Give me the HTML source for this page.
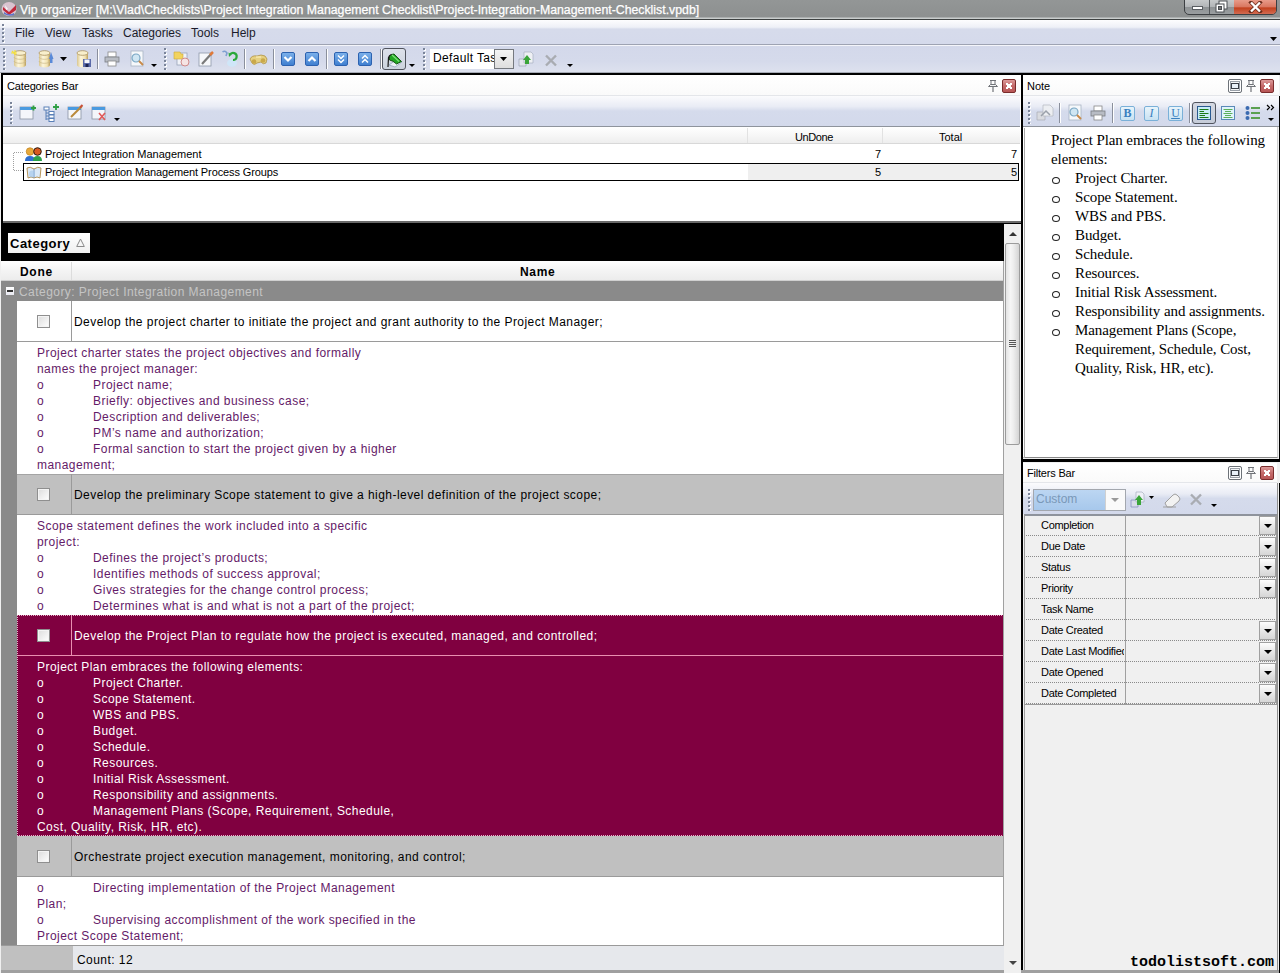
<!DOCTYPE html>
<html><head><meta charset="utf-8">
<style>
*{margin:0;padding:0;box-sizing:border-box}
html,body{width:1280px;height:973px;overflow:hidden;background:#f0f0f0;font-family:"Liberation Sans",sans-serif;font-size:11px;color:#000}
.a{position:absolute;white-space:nowrap}
#title{left:0;top:0;width:1280px;height:20px;background:linear-gradient(#939696 0,#8d9090 17px,#c9cdcd 18px);border-bottom:1px solid #3e4242}
#title .t{left:20px;top:3px;color:#fff;font-size:12.3px;white-space:nowrap;-webkit-text-stroke:0.25px #fff}
#menu{left:0;top:20px;width:1280px;height:25px;background:linear-gradient(#fdfdfe,#eef0f7 30%,#d6dbeb 38%,#d5daeb);border-bottom:1px solid #9ea3b2}
#menu span{position:absolute;top:6px;font-size:12px;color:#1b1b2a}
#tb{left:0;top:45px;width:1280px;height:28px;background:linear-gradient(#d3d8ea,#d5daeb 60%,#dde1ee);box-shadow:inset 0 1px 0 #f4f5fa;border-bottom:1px solid #a5aab5}
.grip{position:absolute;width:3px;background-image:linear-gradient(#7a8499 50%,transparent 50%),linear-gradient(#fff 50%,transparent 50%);background-size:2px 4px,2px 4px;background-position:0 0,1px 1px;background-repeat:repeat-y}
#cat{left:0;top:0;width:0;height:0}
#catbg{left:1px;top:73px;width:1022px;height:151px;background:#fff;border:2px solid #000;border-bottom:none}
#grid{left:2px;top:224px;width:1019px;height:749px;background:#fff}
.pl{font-size:12px;letter-spacing:0.45px;line-height:16px;white-space:nowrap}
.tl{font-size:12px;letter-spacing:0.45px;line-height:16px;white-space:nowrap}
.cb{width:13px;height:13px;border:1px solid #8f8f8f;background:linear-gradient(135deg,#dcdcdc,#fff);box-shadow:inset 0 0 0 1px #f4f4f4}
.sep{position:absolute;top:4px;width:1px;height:20px;background:#8a8f9c;box-shadow:1px 0 0 #fff}
.bb{width:14px;height:14px;border-radius:2px;background:linear-gradient(#7bb0ea,#3f7fd0);border:1px solid #2c62b0}
.bb svg{position:absolute;left:-1px;top:-1px}
.xbtn{width:14px;height:14px;border:1px solid #7a2c2c;border-radius:2px;background:linear-gradient(#dc9a9a,#c46a6a 50%,#b85656)}
.xbtn:after{content:"";position:absolute;left:3px;top:3px;width:6px;height:6px;background:linear-gradient(45deg,transparent 38%,#fff 38%,#fff 62%,transparent 62%),linear-gradient(-45deg,transparent 38%,#fff 38%,#fff 62%,transparent 62%)}
.nt{font-family:"Liberation Serif",serif;font-size:15px;line-height:19px;letter-spacing:-0.1px}
.flt{width:14px;height:14px;border:1px solid #6d7278;border-radius:2px;background:#f2f4f6;box-shadow:inset 0 0 0 1px #fff,inset 0 0 0 2px #9aa0a8}
.flt:after{content:"";position:absolute;left:2px;top:3px;width:8px;height:6px;border:1px solid #3a4048;background:#e8f0f8;box-sizing:border-box}
.fb{width:15px;height:15px;border:1px solid #7ab0d8;border-radius:2px;background:linear-gradient(#e8f4fb,#c8e2f2);color:#3a80c0;font-family:"Liberation Serif",serif;font-size:12px;line-height:13px;text-align:center}
.ddb{width:17px;height:19px;border:1px solid #a0a0a0;background:linear-gradient(#fdfdfd,#e8e8e8 50%,#d6d6d6)}
.ddb:after{content:"";position:absolute;left:4px;top:7px;border-left:4px solid transparent;border-right:4px solid transparent;border-top:4px solid #000}
.nb{width:8px;height:7px;border:1.2px solid #222;border-radius:50%}
</style></head><body>
<div id="title" class="a">
<svg class="a" style="left:1px;top:1px" width="16" height="16" viewBox="0 0 16 16"><ellipse cx="8" cy="8" rx="7.5" ry="7" fill="#d9c3cf"/><path d="M2 6 L8 11 L15 4 L15 9 L8 14 L2 9Z" fill="#c0283a"/><path d="M3 11 Q8 15 13 12 L13 14 Q8 16 3 13Z" fill="#5f73c9"/><path d="M4 4 L7 8 L5 9Z" fill="#fff" opacity=".8"/></svg>
<div class="t a">Vip organizer [M:\Vlad\Checklists\Project Integration Management Checklist\Project-Integration-Management-Checklist.vpdb]</div>
<div class="a" style="left:1184px;top:-2px;width:93px;height:17px;border:1px solid #3c3f42;border-radius:0 0 5px 5px;overflow:hidden;background:linear-gradient(#c9cccd,#b3b6b8 50%,#8e9294 55%,#9a9ea0)">
<div class="a" style="left:24px;top:0;width:1px;height:16px;background:#55595c"></div>
<div class="a" style="left:49px;top:0;width:43px;height:16px;background:linear-gradient(#eaa08f,#d9765f 50%,#c2401d 55%,#d5725a)"></div>
<div class="a" style="left:7px;top:7px;width:11px;height:4px;background:#fff;border:1px solid #5a5e62"></div>
<svg class="a" style="left:30px;top:1px" width="13" height="13" viewBox="0 0 13 13"><rect x="4" y="1" width="8" height="8" fill="#fff" stroke="#4a4e52"/><rect x="1" y="4" width="8" height="8" fill="#fff" stroke="#4a4e52"/><rect x="3.5" y="6.5" width="3" height="3" fill="#777" stroke="#4a4e52"/></svg>
<svg class="a" style="left:63px;top:2px" width="15" height="12" viewBox="0 0 15 12"><path d="M3 1.5 L12 10.5 M12 1.5 L3 10.5" stroke="#6a2a1a" stroke-width="3.8" stroke-linecap="square"/><path d="M3 1.5 L12 10.5 M12 1.5 L3 10.5" stroke="#fff" stroke-width="2.4"/></svg>
</div>
</div>
<div id="menu" class="a">
<div class="grip" style="left:2px;top:4px;height:20px"></div>
<span style="left:15px">File</span><span style="left:45px">View</span><span style="left:82px">Tasks</span><span style="left:123px">Categories</span><span style="left:191px">Tools</span><span style="left:231px">Help</span>
<svg class="a" style="left:1270px;top:17px" width="7" height="4"><path d="M0 0H7L3.5 4Z" fill="#000"/></svg>
</div>
<div id="tb" class="a">
<div class="grip" style="left:3px;top:3px;height:22px"></div>
<div class="grip" style="left:164px;top:3px;height:22px"></div>
<div class="grip" style="left:423px;top:3px;height:22px"></div>
<div class="sep" style="left:97px"></div><div class="sep" style="left:244px"></div><div class="sep" style="left:273px"></div><div class="sep" style="left:326px"></div><div class="sep" style="left:380px"></div>
<svg class="a" style="left:11px;top:5px" width="17" height="18" viewBox="0 0 17 18"><defs><linearGradient id="cy" x1="0" x2="1"><stop offset="0" stop-color="#d9c68e"/><stop offset=".35" stop-color="#fdf6dc"/><stop offset=".75" stop-color="#f2e2b0"/><stop offset="1" stop-color="#b89c5a"/></linearGradient></defs><path d="M3 3 V15 A6 2.5 0 0 0 15 15 V3Z" fill="url(#cy)"/><ellipse cx="9" cy="3" rx="6" ry="2.3" fill="#f8efcc" stroke="#a89060" stroke-width=".8"/><path d="M3 7 A6 2.3 0 0 0 15 7 M3 11 A6 2.3 0 0 0 15 11" fill="none" stroke="#c9b888" stroke-width=".7"/><path d="M1 1 L4 4 M4 0 V5 M0 3 H6" stroke="#f6e23b" stroke-width="1.2"/></svg>
<svg class="a" style="left:37px;top:5px" width="17" height="18" viewBox="0 0 17 18"><path d="M2 3 V15 A5.5 2.5 0 0 0 13 15 V3Z" fill="url(#cy)"/><ellipse cx="7.5" cy="3" rx="5.5" ry="2.3" fill="#f8efcc" stroke="#a89060" stroke-width=".8"/><path d="M2 7 A5.5 2.3 0 0 0 13 7 M2 11 A5.5 2.3 0 0 0 13 11" fill="none" stroke="#c9b888" stroke-width=".7"/><path d="M12 9 L14 2 L16.5 9Z" fill="#5a8ad8"/><rect x="13" y="8" width="2.5" height="5" fill="#5a8ad8"/></svg>
<svg class="a" style="left:60px;top:12px" width="7" height="4"><path d="M0 0H7L3.5 4Z" fill="#000"/></svg>
<svg class="a" style="left:75px;top:5px" width="17" height="18" viewBox="0 0 17 18"><path d="M2 3 V15 A5.5 2.5 0 0 0 13 15 V3Z" fill="url(#cy)"/><ellipse cx="7.5" cy="3" rx="5.5" ry="2.3" fill="#f8efcc" stroke="#a89060" stroke-width=".8"/><rect x="8" y="9" width="8" height="8" fill="#5a6aa8"/><rect x="9.5" y="9.5" width="5" height="3.5" fill="#f4f6fb"/><rect x="10.5" y="14" width="3" height="3" fill="#1c2450"/></svg>
<svg class="a" style="left:104px;top:6px" width="16" height="16" viewBox="0 0 16 16"><rect x="4" y="1" width="8" height="5" fill="#fff" stroke="#888" stroke-width=".8"/><rect x="1" y="6" width="14" height="5" fill="#b8bcc4" stroke="#7a7e86" stroke-width=".8"/><rect x="4" y="10" width="8" height="5" fill="#fff" stroke="#888" stroke-width=".8"/></svg>
<svg class="a" style="left:129px;top:5px" width="16" height="17" viewBox="0 0 16 17"><rect x="2" y="1" width="12" height="15" fill="#f6f8fb" stroke="#a9b3c3" stroke-width=".8"/><circle cx="7" cy="8" r="4" fill="#cfe6f3" stroke="#7aa7c4" stroke-width="1.2"/><path d="M10 11 L14 15" stroke="#c88a4a" stroke-width="2"/></svg>
<svg class="a" style="left:151px;top:19px" width="6" height="3"><path d="M0 0H6L3 3Z" fill="#000"/></svg>
<svg class="a" style="left:173px;top:5px" width="18" height="17" viewBox="0 0 18 17"><rect x="4" y="3" width="10" height="12" fill="#f1f3f8" stroke="#9aa4b8" stroke-width=".8"/><path d="M1 2 H7 L8 4 H10 V9 H1Z" fill="#f2d35e" stroke="#c9a93a" stroke-width=".6"/><circle cx="12" cy="12" r="4" fill="#f5e4e4" stroke="#d08a8a" stroke-width="1"/></svg>
<svg class="a" style="left:197px;top:5px" width="18" height="17" viewBox="0 0 18 17"><rect x="2" y="3" width="12" height="13" fill="#f6f7fa" stroke="#8f99ab" stroke-width=".8"/><path d="M5 14 L15 3" stroke="#7a7a7a" stroke-width="2.2"/><path d="M13 5 L16 2" stroke="#e07a3a" stroke-width="2.5"/></svg>
<svg class="a" style="left:221px;top:4px" width="18" height="18" viewBox="0 0 18 18"><ellipse cx="11" cy="14" rx="5" ry="3.8" fill="#cfe6f8"/><path d="M1.5 3 Q4 1 6 4 L5 7" stroke="#7f9fd0" stroke-width="1.6" fill="none"/><path d="M9 6 A3.5 3.5 0 1 1 12 11" stroke="#2aa83a" stroke-width="2.2" fill="none"/><path d="M7.5 3.5 L10.5 5.5 L8 8Z" fill="#2aa83a"/></svg>
<svg class="a" style="left:249px;top:8px" width="19" height="13" viewBox="0 0 19 13"><path d="M1 6 Q3 2 8 3 L12 2 Q17 2 18 6 L17 10 Q14 12 12 9 L8 10 Q5 13 3 10Z" fill="#e6d082" stroke="#a88a3a" stroke-width=".7"/><circle cx="5" cy="8.5" r="2.3" fill="#c9a84a"/><circle cx="14" cy="7.5" r="2.3" fill="#c9a84a"/><path d="M7 4 H12" stroke="#fff3c0" stroke-width="1"/></svg>
<div class="a bb" style="left:281px;top:7px"><svg width="14" height="14" viewBox="0 0 14 14"><path d="M3.5 5 L7 8.5 L10.5 5" stroke="#fff" stroke-width="2.2" fill="none"/></svg></div>
<div class="a bb" style="left:305px;top:7px"><svg width="14" height="14" viewBox="0 0 14 14"><path d="M3.5 9 L7 5.5 L10.5 9" stroke="#fff" stroke-width="2.2" fill="none"/></svg></div>
<div class="a bb" style="left:334px;top:7px"><svg width="14" height="14" viewBox="0 0 14 14"><path d="M4 3.5 L7 6.5 L10 3.5 M4 7.5 L7 10.5 L10 7.5" stroke="#fff" stroke-width="1.5" fill="none"/></svg></div>
<div class="a bb" style="left:358px;top:7px"><svg width="14" height="14" viewBox="0 0 14 14"><path d="M4 6.5 L7 3.5 L10 6.5 M4 10.5 L7 7.5 L10 10.5" stroke="#fff" stroke-width="1.5" fill="none"/></svg></div>
<div class="a" style="left:382px;top:3px;width:24px;height:22px;border:1px solid #50545e;border-radius:3px;background:linear-gradient(#dde1ea,#ccd3de)"></div>
<svg class="a" style="left:385px;top:6px" width="18" height="17" viewBox="0 0 18 17"><path d="M4 14 L10 16 L17 11 L11 9Z" fill="#eef2f6" stroke="#8aa0b8" stroke-width=".7"/><path d="M4.5 5 Q6 3 9 3 L16.5 10.5 L11.5 13 Q8 9.5 4.5 9Z" fill="#22a622" stroke="#0c4a0c" stroke-width=".9"/><path d="M7 4 L14 10.5" stroke="#7ee07a" stroke-width="1.2"/><path d="M3 16 L3.5 6.5 Q4 4 6.5 3.5" stroke="#1a1a1a" stroke-width="1.2" fill="none"/></svg>
<svg class="a" style="left:409px;top:19px" width="6" height="3"><path d="M0 0H6L3 3Z" fill="#000"/></svg>
<div class="a" style="left:430px;top:4px;width:84px;height:20px;background:#fff"></div>
<div class="a" style="left:433px;top:6px;font-size:12px;letter-spacing:0.35px;width:61px;overflow:hidden;white-space:nowrap">Default Task</div>
<div class="a" style="left:494px;top:4px;width:20px;height:20px;border:1px solid #75797f;background:linear-gradient(#f4f4f4,#dedede)"></div>
<svg class="a" style="left:500px;top:12px" width="7" height="4"><path d="M0 0H7L3.5 4Z" fill="#000"/></svg>
<svg class="a" style="left:517px;top:6px" width="18" height="17" viewBox="0 0 18 17"><path d="M2 8 H9 V15 H2Z" fill="#e3e6ec" stroke="#9aa2b4" stroke-width=".7"/><path d="M7 1 H14 L16 3 V12 H7Z" fill="#eef0f4" stroke="#a8b0c0" stroke-width=".7"/><path d="M8 13 L8 9 L6 9 L10 4 L14 9 L12 9 L12 13Z" fill="#3aa53a"/></svg>
<svg class="a" style="left:544px;top:9px" width="14" height="13" viewBox="0 0 14 13"><path d="M2 1.5 L12 11.5 M12 1.5 L2 11.5" stroke="#a9acb2" stroke-width="2.4"/></svg>
<svg class="a" style="left:567px;top:19px" width="6" height="3"><path d="M0 0H6L3 3Z" fill="#000"/></svg>
</div>
<div id="catbg" class="a"></div>
<div id="cat" class="a">
<div class="a" style="left:3px;top:75px;width:1017px;height:21px;background:linear-gradient(#fff,#fafafa);border-bottom:1px solid #e4e6ea;border-radius:3px 3px 0 0"></div>
<div class="a" style="left:7px;top:80px;font-size:11px;letter-spacing:-0.15px">Categories Bar</div>
<svg class="a" style="left:987px;top:79px" width="12" height="14" viewBox="0 0 12 14"><path d="M3 1.5 H9 M4 1.5 V5.5 M8 1.5 V5.5 M1.5 7.5 H10.5 L8.5 5.5 H3.5Z" stroke="#707378" stroke-width="1" fill="#f4f4f4"/><path d="M6 8 V13" stroke="#707378" stroke-width="1.2"/></svg>
<div class="a xbtn" style="left:1002px;top:79px"></div>
<div class="a" style="left:3px;top:96px;width:1017px;height:31px;background:linear-gradient(#fbfbfd,#e9ecf5 35%,#d5dbec 50%,#d3d9eb);border-bottom:1px solid #8e939c"></div>
<div class="grip" style="left:10px;top:102px;height:22px"></div>
<svg class="a" style="left:19px;top:104px" width="17" height="17" viewBox="0 0 17 17"><rect x="1" y="3" width="13" height="12" fill="#f4f6fa" stroke="#8a93a4" stroke-width=".8"/><rect x="1" y="3" width="13" height="3" fill="#4a9ae0"/><path d="M12 4 H17 M14.5 1.5 V6.5" stroke="#2f9f45" stroke-width="1.8"/></svg>
<svg class="a" style="left:43px;top:104px" width="17" height="18" viewBox="0 0 17 18"><path d="M3 5 V16 M3 9 H6 M3 12 H6 M3 15 H6" stroke="#5a80b8" stroke-width="1"/><rect x="1" y="3" width="5" height="3" fill="#fff" stroke="#5a80b8"/><rect x="6" y="7.5" width="5" height="3" fill="#fff" stroke="#5a80b8"/><rect x="6" y="11" width="5" height="3" fill="#fff" stroke="#5a80b8"/><rect x="6" y="14.5" width="5" height="3" fill="#fff" stroke="#5a80b8"/><path d="M10 3 H16 M13 0 V6" stroke="#2f9f45" stroke-width="1.8"/></svg>
<svg class="a" style="left:67px;top:104px" width="17" height="17" viewBox="0 0 17 17"><rect x="1" y="3" width="13" height="12" fill="#f4f6fa" stroke="#8a93a4" stroke-width=".8"/><rect x="1" y="3" width="13" height="3" fill="#4a9ae0"/><path d="M4 13 L15 2" stroke="#b98a3a" stroke-width="2"/><path d="M13 3.5 L15.5 1" stroke="#c8503a" stroke-width="2"/></svg>
<svg class="a" style="left:91px;top:104px" width="17" height="17" viewBox="0 0 17 17"><rect x="1" y="3" width="13" height="12" fill="#f4f6fa" stroke="#8a93a4" stroke-width=".8"/><rect x="1" y="3" width="13" height="3" fill="#4a9ae0"/><path d="M8 9 L14 16 M14 9 L8 16" stroke="#e05a5a" stroke-width="1.6"/></svg>
<svg class="a" style="left:114px;top:118px" width="6" height="3"><path d="M0 0H6L3 3Z" fill="#000"/></svg>
<div class="a" style="left:3px;top:127px;width:1017px;height:17px;background:linear-gradient(#fff,#f7f7f7 50%,#eeeeee);border-bottom:1px solid #d8d8d8"></div>
<div class="a" style="left:747px;top:128px;width:1px;height:15px;background:#e2e2e2"></div>
<div class="a" style="left:882px;top:128px;width:1px;height:15px;background:#e2e2e2"></div>
<div class="a" style="left:795px;top:131px;font-size:11px;letter-spacing:-0.4px">UnDone</div>
<div class="a" style="left:939px;top:131px;font-size:11px">Total</div>
<svg class="a" style="left:13px;top:152px" width="11" height="20"><path d="M0.5 1 V19 M1 0.5 H11 M1 18.5 H11" stroke="#a0a0a0" stroke-dasharray="1 1" fill="none"/></svg>
<svg class="a" style="left:25px;top:147px" width="18" height="15" viewBox="0 0 18 15"><circle cx="5" cy="4.5" r="3.8" fill="#e8a93a" stroke="#b77a1a" stroke-width=".6"/><path d="M0 14 Q0 9 5 9 Q10 9 10 14Z" fill="#2f6fd0"/><circle cx="12.5" cy="4.5" r="3.8" fill="#d85a20" stroke="#2a1a10" stroke-width="1"/><path d="M8 14 Q8 9 12.5 9 Q17 9 17 14Z" fill="#2da24a"/></svg>
<div class="a" style="left:45px;top:148px;font-size:11px">Project Integration Management</div>
<div class="a" style="left:868px;top:148px;font-size:11px;width:13px;text-align:right">7</div>
<div class="a" style="left:1004px;top:148px;font-size:11px;width:13px;text-align:right">7</div>
<div class="a" style="left:748px;top:164px;width:270px;height:16px;background:#efefef"></div>
<div class="a" style="left:23px;top:163px;width:996px;height:18px;border:1px solid #000"></div>
<svg class="a" style="left:25px;top:165px" width="18" height="15" viewBox="0 0 18 15"><path d="M2 3 Q5 1 9 4 Q13 1 16 3 L15 13 Q12 11 9 13 Q6 11 3 13Z" fill="#dbe9f7" stroke="#b08a4a" stroke-width=".9"/><path d="M9 4 V13" stroke="#6a88b8" stroke-width=".8"/><ellipse cx="7" cy="9" rx="3" ry="3.5" fill="#9ec4ea" opacity=".6"/></svg>
<div class="a" style="left:45px;top:166px;font-size:11px;letter-spacing:-0.12px">Project Integration Management Process Groups</div>
<div class="a" style="left:868px;top:166px;font-size:11px;width:13px;text-align:right">5</div>
<div class="a" style="left:1004px;top:166px;font-size:11px;width:13px;text-align:right">5</div>
<div class="a" style="left:3px;top:221px;width:1018px;height:3px;background:#6a6a6a;border-bottom:1px solid #000"></div>
</div>
<div class="a" style="left:1px;top:224px;width:1003px;height:37px;background:#000"></div>
<div class="a" style="left:8px;top:233px;width:82px;height:20px;background:linear-gradient(#fff,#f0f0f0)"></div>
<div class="a" style="left:10px;top:236px;font-weight:bold;font-size:13px;letter-spacing:0.5px">Category</div>
<svg class="a" style="left:76px;top:238px" width="9" height="10"><path d="M4.5 1 L8.3 8.5 H0.7Z" fill="none" stroke="#8a8a8a" stroke-width="1"/></svg>
<div class="a" style="left:1px;top:261px;width:1003px;height:20px;background:linear-gradient(#fff,#f4f4f4 50%,#ececec);border-bottom:1px solid #d0d0d0"></div>
<div class="a" style="left:71px;top:262px;width:1px;height:18px;background:#dcdcdc"></div>
<div class="a" style="left:20px;top:265px;font-weight:bold;font-size:12px;letter-spacing:0.7px">Done</div>
<div class="a" style="left:520px;top:265px;font-weight:bold;font-size:12px;letter-spacing:0.7px">Name</div>
<div class="a" style="left:1px;top:281px;width:1003px;height:20px;background:#8a8a8a"></div>
<div class="a" style="left:6px;top:287px;width:8px;height:8px;background:linear-gradient(#fff,#e8e8f0)"></div><div class="a" style="left:7px;top:290px;width:6px;height:2px;background:#333"></div>
<div class="a" style="left:19px;top:285px;color:#c4c4c4;font-size:12px;letter-spacing:0.45px">Category: Project Integration Management</div>
<div class="a" style="left:1px;top:301px;width:16px;height:644px;background:#8a8a8a"></div>
<div class="a" style="left:17px;top:301px;width:987px;height:41px;background:#fff;border-bottom:1px solid #9a9a9a"></div><div class="a" style="left:71px;top:301px;width:1px;height:40px;background:#9a9a9a"></div><div class="a cb" style="left:37px;top:315px"></div><div class="a tl" style="left:74px;top:314px;color:#000">Develop the project charter to initiate the project and grant authority to the Project Manager;</div>
<div class="a" style="left:17px;top:342px;width:987px;height:132px;background:#fff"></div>
<div class="a pl" style="top:345px;left:37px;color:#641a68">Project charter states the project objectives and formally</div>
<div class="a pl" style="top:361px;left:37px;color:#641a68">names the project manager:</div>
<div class="a pl" style="top:377px;left:37px;color:#641a68">o</div><div class="a pl" style="top:377px;left:93px;color:#641a68">Project name;</div>
<div class="a pl" style="top:393px;left:37px;color:#641a68">o</div><div class="a pl" style="top:393px;left:93px;color:#641a68">Briefly: objectives and business case;</div>
<div class="a pl" style="top:409px;left:37px;color:#641a68">o</div><div class="a pl" style="top:409px;left:93px;color:#641a68">Description and deliverables;</div>
<div class="a pl" style="top:425px;left:37px;color:#641a68">o</div><div class="a pl" style="top:425px;left:93px;color:#641a68">PM&#8217;s name and authorization;</div>
<div class="a pl" style="top:441px;left:37px;color:#641a68">o</div><div class="a pl" style="top:441px;left:93px;color:#641a68">Formal sanction to start the project given by a higher</div>
<div class="a pl" style="top:457px;left:37px;color:#641a68">management;</div>
<div class="a" style="left:17px;top:474px;width:987px;height:41px;background:#c0c0c0;border-bottom:1px solid #9a9a9a;border-top:1px solid #a4a4a4"></div><div class="a" style="left:71px;top:474px;width:1px;height:40px;background:#9a9a9a"></div><div class="a cb" style="left:37px;top:488px"></div><div class="a tl" style="left:74px;top:487px;color:#000">Develop the preliminary Scope statement to give a high-level definition of the project scope;</div>
<div class="a" style="left:17px;top:515px;width:987px;height:100px;background:#fff"></div>
<div class="a pl" style="top:518px;left:37px;color:#641a68">Scope statement defines the work included into a specific</div>
<div class="a pl" style="top:534px;left:37px;color:#641a68">project:</div>
<div class="a pl" style="top:550px;left:37px;color:#641a68">o</div><div class="a pl" style="top:550px;left:93px;color:#641a68">Defines the project&#8217;s products;</div>
<div class="a pl" style="top:566px;left:37px;color:#641a68">o</div><div class="a pl" style="top:566px;left:93px;color:#641a68">Identifies methods of success approval;</div>
<div class="a pl" style="top:582px;left:37px;color:#641a68">o</div><div class="a pl" style="top:582px;left:93px;color:#641a68">Gives strategies for the change control process;</div>
<div class="a pl" style="top:598px;left:37px;color:#641a68">o</div><div class="a pl" style="top:598px;left:93px;color:#641a68">Determines what is and what is not a part of the project;</div>
<div class="a" style="left:17px;top:615px;width:987px;height:41px;background:#800040;border-bottom:1px solid #e98fb0"></div><div class="a" style="left:71px;top:615px;width:1px;height:40px;background:#e98fb0"></div><div class="a cb" style="left:37px;top:629px"></div><div class="a tl" style="left:74px;top:628px;color:#fff">Develop the Project Plan to regulate how the project is executed, managed, and controlled;</div>
<div class="a" style="left:17px;top:656px;width:987px;height:180px;background:#800040"></div><div class="a" style="left:17px;top:615px;width:987px;height:221px;border:1px dotted #e8b0c8"></div>
<div class="a pl" style="top:659px;left:37px;color:#fff">Project Plan embraces the following elements:</div>
<div class="a pl" style="top:675px;left:37px;color:#fff">o</div><div class="a pl" style="top:675px;left:93px;color:#fff">Project Charter.</div>
<div class="a pl" style="top:691px;left:37px;color:#fff">o</div><div class="a pl" style="top:691px;left:93px;color:#fff">Scope Statement.</div>
<div class="a pl" style="top:707px;left:37px;color:#fff">o</div><div class="a pl" style="top:707px;left:93px;color:#fff">WBS and PBS.</div>
<div class="a pl" style="top:723px;left:37px;color:#fff">o</div><div class="a pl" style="top:723px;left:93px;color:#fff">Budget.</div>
<div class="a pl" style="top:739px;left:37px;color:#fff">o</div><div class="a pl" style="top:739px;left:93px;color:#fff">Schedule.</div>
<div class="a pl" style="top:755px;left:37px;color:#fff">o</div><div class="a pl" style="top:755px;left:93px;color:#fff">Resources.</div>
<div class="a pl" style="top:771px;left:37px;color:#fff">o</div><div class="a pl" style="top:771px;left:93px;color:#fff">Initial Risk Assessment.</div>
<div class="a pl" style="top:787px;left:37px;color:#fff">o</div><div class="a pl" style="top:787px;left:93px;color:#fff">Responsibility and assignments.</div>
<div class="a pl" style="top:803px;left:37px;color:#fff">o</div><div class="a pl" style="top:803px;left:93px;color:#fff">Management Plans (Scope, Requirement, Schedule,</div>
<div class="a pl" style="top:819px;left:37px;color:#fff">Cost, Quality, Risk, HR, etc).</div>
<div class="a" style="left:17px;top:836px;width:987px;height:41px;background:#c0c0c0;border-bottom:1px solid #9a9a9a"></div><div class="a" style="left:71px;top:836px;width:1px;height:40px;background:#9a9a9a"></div><div class="a cb" style="left:37px;top:850px"></div><div class="a tl" style="left:74px;top:849px;color:#000">Orchestrate project execution management, monitoring, and control;</div>
<div class="a" style="left:17px;top:877px;width:987px;height:68px;background:#fff"></div>
<div class="a pl" style="top:880px;left:37px;color:#641a68">o</div><div class="a pl" style="top:880px;left:93px;color:#641a68">Directing implementation of the Project Management</div>
<div class="a pl" style="top:896px;left:37px;color:#641a68">Plan;</div>
<div class="a pl" style="top:912px;left:37px;color:#641a68">o</div><div class="a pl" style="top:912px;left:93px;color:#641a68">Supervising accomplishment of the work specified in the</div>
<div class="a pl" style="top:928px;left:37px;color:#641a68">Project Scope Statement;</div>
<div class="a" style="left:1px;top:945px;width:1003px;height:28px;background:#e6e8ec;border-top:1px solid #9a9a9a;border-bottom:3px solid #a0a0a0"></div>
<div class="a" style="left:1px;top:946px;width:72px;height:24px;background:#c0c0c0"></div>
<div class="a" style="left:77px;top:953px;font-size:12px;letter-spacing:0.45px">Count: 12</div>
<div class="a" style="left:1003px;top:261px;width:1px;height:685px;background:#a0a0a0"></div>
<div class="a" style="left:1004px;top:224px;width:17px;height:749px;background:#f0f0f0"></div>
<svg class="a" style="left:1009px;top:231px" width="8" height="5"><path d="M0 5 L4 1 L8 5Z" fill="#333"/></svg>
<div class="a" style="left:1005px;top:243px;width:15px;height:202px;border:1px solid #9c9c9c;border-radius:2px;background:linear-gradient(90deg,#e4e4e4,#f6f6f6 35%,#ececec 60%,#d4d4d4)"></div>
<div class="a" style="left:1009px;top:340px;width:7px;height:8px;background:repeating-linear-gradient(#555 0 1px,transparent 1px 2px)"></div>
<svg class="a" style="left:1009px;top:961px" width="8" height="5"><path d="M0 0 L8 0 L4 4Z" fill="#444"/></svg>
<div class="a" style="left:1021px;top:224px;width:2px;height:749px;background:#000"></div>
<div class="a" style="left:1021px;top:73px;width:259px;height:388px;background:#f0f0f0;border:2px solid #000;border-right:none"></div>
<div class="a" style="left:1023px;top:75px;width:256px;height:21px;background:linear-gradient(#fff,#fafafa);border-bottom:1px solid #e4e6ea"></div>
<div class="a" style="left:1027px;top:80px;font-size:11px">Note</div>
<div class="a flt" style="left:1228px;top:79px"></div>
<svg class="a" style="left:1245px;top:79px" width="12" height="14" viewBox="0 0 12 14"><path d="M3 1.5 H9 M4 1.5 V5.5 M8 1.5 V5.5 M1.5 7.5 H10.5 L8.5 5.5 H3.5Z" stroke="#707378" stroke-width="1" fill="#f4f4f4"/><path d="M6 8 V13" stroke="#707378" stroke-width="1.2"/></svg>
<div class="a xbtn" style="left:1260px;top:79px"></div>
<div class="a" style="left:1023px;top:96px;width:256px;height:31px;background:linear-gradient(#fbfbfd,#e9ecf5 35%,#d5dbec 50%,#d3d9eb);border-bottom:1px solid #8e939c"></div>
<div class="grip" style="left:1028px;top:102px;height:22px"></div>
<svg class="a" style="left:1036px;top:104px" width="18" height="17" viewBox="0 0 18 17"><path d="M1 8 H9 V16 H1Z" fill="#d9dbe0" stroke="#a9adb5" stroke-width=".7"/><path d="M7 1 H14 L17 4 V12 H7Z" fill="#eceef2" stroke="#b4b8c0" stroke-width=".7"/><path d="M5 12 L10 7 L14 11" stroke="#9aa0aa" stroke-width="1.5" fill="none"/></svg>
<div class="sep" style="left:1059px;top:103px"></div>
<svg class="a" style="left:1067px;top:104px" width="16" height="17" viewBox="0 0 16 17"><rect x="2" y="1" width="12" height="15" fill="#f6f8fb" stroke="#a9b3c3" stroke-width=".8"/><circle cx="7" cy="8" r="4" fill="#cfe6f3" stroke="#7aa7c4" stroke-width="1.2"/><path d="M10 11 L14 15" stroke="#c88a4a" stroke-width="2"/></svg>
<svg class="a" style="left:1090px;top:105px" width="16" height="16" viewBox="0 0 16 16"><rect x="4" y="1" width="8" height="5" fill="#fff" stroke="#888" stroke-width=".8"/><rect x="1" y="6" width="14" height="5" fill="#b8bcc4" stroke="#7a7e86" stroke-width=".8"/><rect x="4" y="10" width="8" height="5" fill="#fff" stroke="#888" stroke-width=".8"/></svg>
<div class="sep" style="left:1112px;top:103px"></div>
<div class="a fb" style="left:1120px;top:106px;font-weight:bold">B</div>
<div class="a fb" style="left:1144px;top:106px;font-style:italic">I</div>
<div class="a fb" style="left:1168px;top:106px;text-decoration:underline">U</div>
<div class="sep" style="left:1189px;top:103px"></div>
<div class="a" style="left:1192px;top:102px;width:24px;height:22px;border:1px solid #50545e;border-radius:3px;background:linear-gradient(#d4d8e2,#c6ccd8)"></div>
<svg class="a" style="left:1197px;top:106px" width="15" height="15" viewBox="0 0 15 15"><rect x=".5" y=".5" width="13" height="13" fill="#c8ecf8" stroke="#2a5a90"/><path d="M2.5 3.5 H11.5 M2.5 5.5 H7 M2.5 7.5 H11.5 M2.5 9.5 H8 M2.5 11.5 H11.5" stroke="#1a7a1a" stroke-width="1"/></svg>
<svg class="a" style="left:1221px;top:106px" width="15" height="15" viewBox="0 0 15 15"><rect x=".5" y=".5" width="13" height="13" fill="#e0f4fb" stroke="#5a8ab8"/><path d="M2.5 3.5 H11.5 M4 5.5 H10 M2.5 7.5 H11.5 M4 9.5 H10 M2.5 11.5 H11.5" stroke="#5ab05a" stroke-width="1"/></svg>
<svg class="a" style="left:1245px;top:105px" width="15" height="16" viewBox="0 0 15 16"><circle cx="2.5" cy="3" r="2" fill="#3a6ab0"/><circle cx="2.5" cy="8" r="2" fill="#3a6ab0"/><circle cx="2.5" cy="13" r="2" fill="#3a6ab0"/><path d="M6 3 H15 M6 8 H15 M6 13 H15" stroke="#5aa050" stroke-width="2"/></svg>
<svg class="a" style="left:1266px;top:104px" width="9" height="18" viewBox="0 0 9 18"><path d="M1 1 L3.5 3.5 L1 6 M5 1 L7.5 3.5 L5 6" stroke="#000" stroke-width="1.2" fill="none"/><path d="M2 14 H8 L5 17Z" fill="#000"/></svg>
<div class="a" style="left:1023px;top:127px;width:255px;height:331px;background:#fff;border-left:1px solid #fff;border-right:1px solid #cfcfcf;border-bottom:1px solid #888"></div><div class="a" style="left:1024px;top:128px;width:1px;height:330px;background:#a8a8a8"></div>
<div class="a nt" style="left:1051px;top:131px">Project Plan embraces the following</div>
<div class="a nt" style="left:1051px;top:150px">elements:</div>
<div class="a nb" style="left:1052px;top:177px"></div><div class="a nt" style="left:1075px;top:169px">Project Charter.</div>
<div class="a nb" style="left:1052px;top:196px"></div><div class="a nt" style="left:1075px;top:188px">Scope Statement.</div>
<div class="a nb" style="left:1052px;top:215px"></div><div class="a nt" style="left:1075px;top:207px">WBS and PBS.</div>
<div class="a nb" style="left:1052px;top:234px"></div><div class="a nt" style="left:1075px;top:226px">Budget.</div>
<div class="a nb" style="left:1052px;top:253px"></div><div class="a nt" style="left:1075px;top:245px">Schedule.</div>
<div class="a nb" style="left:1052px;top:272px"></div><div class="a nt" style="left:1075px;top:264px">Resources.</div>
<div class="a nb" style="left:1052px;top:291px"></div><div class="a nt" style="left:1075px;top:283px">Initial Risk Assessment.</div>
<div class="a nb" style="left:1052px;top:310px"></div><div class="a nt" style="left:1075px;top:302px">Responsibility and assignments.</div>
<div class="a nb" style="left:1052px;top:329px"></div><div class="a nt" style="left:1075px;top:321px">Management Plans (Scope,</div>
<div class="a nt" style="left:1075px;top:340px">Requirement, Schedule, Cost,</div>
<div class="a nt" style="left:1075px;top:359px">Quality, Risk, HR, etc).</div>
<div class="a" style="left:1021px;top:460px;width:259px;height:513px;background:#f0f0f0;border:2px solid #000;border-right:none;border-bottom:none;border-top-width:2px"></div>
<div class="a" style="left:1023px;top:463px;width:254px;height:20px;background:linear-gradient(#fff,#fafafa);border-bottom:1px solid #e4e6ea"></div>
<div class="a" style="left:1027px;top:467px;font-size:11px;letter-spacing:-0.2px">Filters Bar</div>
<div class="a flt" style="left:1228px;top:466px"></div>
<svg class="a" style="left:1245px;top:466px" width="12" height="14" viewBox="0 0 12 14"><path d="M3 1.5 H9 M4 1.5 V5.5 M8 1.5 V5.5 M1.5 7.5 H10.5 L8.5 5.5 H3.5Z" stroke="#707378" stroke-width="1" fill="#f4f4f4"/><path d="M6 8 V13" stroke="#707378" stroke-width="1.2"/></svg>
<div class="a xbtn" style="left:1260px;top:466px"></div>
<div class="a" style="left:1023px;top:483px;width:254px;height:31px;background:linear-gradient(#fbfbfd,#e9ecf5 35%,#d5dbec 50%,#d3d9eb)"></div>
<div class="grip" style="left:1028px;top:489px;height:22px"></div>
<div class="a" style="left:1033px;top:489px;width:93px;height:22px;border:1px solid #a3a7ae;background:linear-gradient(#bcd6f2,#a7c8ec)"></div>
<div class="a" style="left:1105px;top:490px;width:20px;height:20px;background:#fafafa;border-left:1px solid #d0d0d0"></div>
<svg class="a" style="left:1111px;top:498px" width="8" height="4"><path d="M0 0H8L4 4Z" fill="#9a9a9a"/></svg>
<div class="a" style="left:1036px;top:492px;font-size:12px;color:#7a98b8">Custom</div>
<svg class="a" style="left:1129px;top:490px" width="20" height="19" viewBox="0 0 20 19"><path d="M2 10 H9 V17 H2Z" fill="#d8dcea" stroke="#8890c0" stroke-width=".8"/><path d="M7 2 H13 L15 4 V12 H7Z" fill="#eef0f6" stroke="#a8b0c0" stroke-width=".7"/><path d="M8 15 L8 10 L6 10 L10 5 L14 10 L12 10 L12 15Z" fill="#3aa53a"/></svg>
<svg class="a" style="left:1149px;top:496px" width="5" height="3"><path d="M0 0H5L2.5 3Z" fill="#000"/></svg>
<svg class="a" style="left:1162px;top:492px" width="20" height="16" viewBox="0 0 20 16"><path d="M3 11 L11 3 Q13 1 15 3 L17 5 Q19 7 17 9 L10 15 H5 Z" fill="#f2f2f2" stroke="#a0a0a0" stroke-width="1"/><path d="M1 15 H14" stroke="#a0a0a0"/></svg>
<svg class="a" style="left:1189px;top:493px" width="14" height="13" viewBox="0 0 14 13"><path d="M2 1.5 L12 11.5 M12 1.5 L2 11.5" stroke="#a9acb2" stroke-width="2.4"/></svg>
<svg class="a" style="left:1211px;top:504px" width="6" height="3"><path d="M0 0H6L3 3Z" fill="#000"/></svg>
<div class="a" style="left:1024px;top:514px;width:253px;height:191px;background:#f0f0f0;border:1px solid #9a9a9a;border-top:2px solid #8e939c"></div><div class="a" style="left:1024px;top:705px;width:1px;height:266px;background:#a0a0a0"></div>
<div class="a" style="left:1125px;top:516px;width:1px;height:188px;background:#a0a0a0"></div>
<div class="a" style="left:1041px;top:519px;font-size:11px;letter-spacing:-0.3px;width:83px;overflow:hidden">Completion</div>
<div class="a" style="left:1026px;top:535px;width:250px;height:1px;background-image:linear-gradient(90deg,#8a8a8a 50%,transparent 50%);background-size:2px 1px"></div>
<div class="a ddb" style="left:1259px;top:516px"></div>
<div class="a" style="left:1041px;top:540px;font-size:11px;letter-spacing:-0.3px;width:83px;overflow:hidden">Due Date</div>
<div class="a" style="left:1026px;top:556px;width:250px;height:1px;background-image:linear-gradient(90deg,#8a8a8a 50%,transparent 50%);background-size:2px 1px"></div>
<div class="a ddb" style="left:1259px;top:537px"></div>
<div class="a" style="left:1041px;top:561px;font-size:11px;letter-spacing:-0.3px;width:83px;overflow:hidden">Status</div>
<div class="a" style="left:1026px;top:577px;width:250px;height:1px;background-image:linear-gradient(90deg,#8a8a8a 50%,transparent 50%);background-size:2px 1px"></div>
<div class="a ddb" style="left:1259px;top:558px"></div>
<div class="a" style="left:1041px;top:582px;font-size:11px;letter-spacing:-0.3px;width:83px;overflow:hidden">Priority</div>
<div class="a" style="left:1026px;top:598px;width:250px;height:1px;background-image:linear-gradient(90deg,#8a8a8a 50%,transparent 50%);background-size:2px 1px"></div>
<div class="a ddb" style="left:1259px;top:579px"></div>
<div class="a" style="left:1041px;top:603px;font-size:11px;letter-spacing:-0.3px;width:83px;overflow:hidden">Task Name</div>
<div class="a" style="left:1026px;top:619px;width:250px;height:1px;background-image:linear-gradient(90deg,#8a8a8a 50%,transparent 50%);background-size:2px 1px"></div>
<div class="a" style="left:1041px;top:624px;font-size:11px;letter-spacing:-0.3px;width:83px;overflow:hidden">Date Created</div>
<div class="a" style="left:1026px;top:640px;width:250px;height:1px;background-image:linear-gradient(90deg,#8a8a8a 50%,transparent 50%);background-size:2px 1px"></div>
<div class="a ddb" style="left:1259px;top:621px"></div>
<div class="a" style="left:1041px;top:645px;font-size:11px;letter-spacing:-0.3px;width:83px;overflow:hidden">Date Last Modified</div>
<div class="a" style="left:1026px;top:661px;width:250px;height:1px;background-image:linear-gradient(90deg,#8a8a8a 50%,transparent 50%);background-size:2px 1px"></div>
<div class="a ddb" style="left:1259px;top:642px"></div>
<div class="a" style="left:1041px;top:666px;font-size:11px;letter-spacing:-0.3px;width:83px;overflow:hidden">Date Opened</div>
<div class="a" style="left:1026px;top:682px;width:250px;height:1px;background-image:linear-gradient(90deg,#8a8a8a 50%,transparent 50%);background-size:2px 1px"></div>
<div class="a ddb" style="left:1259px;top:663px"></div>
<div class="a" style="left:1041px;top:687px;font-size:11px;letter-spacing:-0.3px;width:83px;overflow:hidden">Date Completed</div>
<div class="a" style="left:1026px;top:703px;width:250px;height:1px;background-image:linear-gradient(90deg,#8a8a8a 50%,transparent 50%);background-size:2px 1px"></div>
<div class="a ddb" style="left:1259px;top:684px"></div>
<div class="a" style="left:1130px;top:954px;font-family:'Liberation Mono',monospace;font-weight:bold;font-size:15px">todolistsoft.com</div>
<div class="a" style="left:1021px;top:970px;width:259px;height:3px;background:#a0a0a0"></div>
<div class="a" style="left:1279px;top:96px;width:1px;height:363px;background:#000"></div><div class="a" style="left:1279px;top:483px;width:1px;height:490px;background:#000"></div>
<div class="a" style="left:1277px;top:483px;width:1px;height:488px;background:#909090"></div>
</body></html>
